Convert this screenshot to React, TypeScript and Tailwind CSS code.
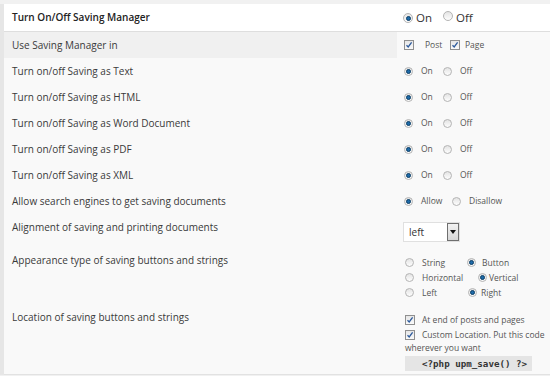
import React from "react";

function Radio({ checked, big }: { checked?: boolean; big?: boolean }) {
  return (
    <span
      className={`inline-flex items-center justify-center rounded-full border border-[#b4b4b4] bg-gradient-to-b from-[#e4e4e4] to-[#fdfdfd] shrink-0 ${big ? "w-[10px] h-[10px]" : "w-[9px] h-[9px]"}`}
    >
      {checked && <span className="w-[5px] h-[5px] rounded-full bg-[#1d6aa8] border border-[#0b3d66]" />}
    </span>
  );
}

function Check() {
  return (
    <span className="inline-flex items-center justify-center w-[10px] h-[10px] border border-[#8f8f8f] bg-gradient-to-b from-[#e6e6e6] to-[#fafafa] shrink-0">
      <svg width="8" height="8" viewBox="0 0 8 8">
        <path d="M1.5 4.2 L3.2 6 L6.6 1.4" fill="none" stroke="#2d5a9c" strokeWidth="1.3" />
      </svg>
    </span>
  );
}

function Pair({ a, b, wa }: { a: string; b: string; wa: number }) {
  return (
    <div className="flex items-center text-[8.5px] leading-[12px] text-[#555]">
      <Radio checked />
      <span className="ml-[8px]" style={{ width: wa }}>{a}</span>
      <Radio />
      <span className="ml-[8px]">{b}</span>
    </div>
  );
}

function Row({ label, children, h = 26, pt = 4, gray }: { label: string; children?: React.ReactNode; h?: number; pt?: number; gray?: boolean }) {
  return (
    <div className="flex" style={{ height: h }}>
      <div
        className={`w-[393px] shrink-0 pl-[8px] text-[10px] leading-[18px] text-[#3a3a3a] ${gray ? "bg-[#f0f0f0]" : ""}`}
        style={{ paddingTop: pt }}
      >
        {label}
      </div>
      <div className="flex-1 pl-[7px]" style={{ paddingTop: pt + 3 }}>
        {children}
      </div>
    </div>
  );
}

export default function App() {
  return (
    <div className="w-[550px] h-[376px] overflow-hidden bg-[#f1f1f1] pt-[4px]" style={{ fontFamily: '"Open Sans", sans-serif' }}>
      <div className="flex">
        <div className="w-[4px] bg-[#e6e6e6] shrink-0" />
        <div className="flex-1 bg-[#f9f9f9] border-b border-[#e2e2e2]">
          {/* header */}
          <div className="flex h-[28px] bg-white border-b border-[#dedede]">
            <div className="w-[393px] shrink-0 pl-[8px] pt-[4px] text-[10px] leading-[18px] font-semibold text-[#222]">
              Turn On/Off Saving Manager
            </div>
            <div className="flex-1 pl-[6px] pt-[4px] flex items-start">
              <div className="flex items-center text-[11.5px] leading-[18px] text-[#333] pt-[1px]">
                <span className="-mt-[3px]"><Radio checked big /></span>
                <span className="ml-[3px] w-[27px]">On</span>
                <span className="-mt-[3px]"><Radio big /></span>
                <span className="ml-[3px]">Off</span>
              </div>
            </div>
          </div>
          <Row label="Use Saving Manager in" gray>
            <div className="flex items-center text-[8.5px] leading-[12px] text-[#555]">
              <Check />
              <span className="ml-[11px] w-[25px]">Post</span>
              <Check />
              <span className="ml-[5px]">Page</span>
            </div>
          </Row>
          <Row label="Turn on/off Saving as Text"><Pair a="On" b="Off" wa={22} /></Row>
          <Row label="Turn on/off Saving as HTML"><Pair a="On" b="Off" wa={22} /></Row>
          <Row label="Turn on/off Saving as Word Document"><Pair a="On" b="Off" wa={22} /></Row>
          <Row label="Turn on/off Saving as PDF"><Pair a="On" b="Off" wa={22} /></Row>
          <Row label="Turn on/off Saving as XML"><Pair a="On" b="Off" wa={22} /></Row>
          <Row label="Allow search engines to get saving documents"><Pair a="Allow" b="Disallow" wa={31} /></Row>
          <div className="flex h-[32px]">
            <div className="w-[393px] shrink-0 pl-[8px] pt-[4px] text-[10px] leading-[18px] text-[#3a3a3a]">
              Alignment of saving and printing documents
            </div>
            <div className="flex-1 pl-[6px] pt-[8px]">
              <div className="flex w-[57px] h-[20px] border border-[#e0e0e0] bg-white">
                <span className="flex-1 pl-[5px] text-[10px] leading-[18px] text-[#333]">left</span>
                <span className="w-[12px] h-[18px] border border-[#6f6f6f] bg-gradient-to-b from-[#f2f2f2] to-[#d6d6d6] flex items-center justify-center">
                  <svg width="6" height="4" viewBox="0 0 6 4"><path d="M0 0 H6 L3 4 Z" fill="#111" /></svg>
                </span>
              </div>
            </div>
          </div>
          {/* appearance */}
          <div className="flex h-[60px]">
            <div className="w-[393px] shrink-0 pl-[8px] pt-[5px] text-[10px] leading-[18px] text-[#3a3a3a]">
              Appearance type of saving buttons and strings
            </div>
            <div className="flex-1 pl-[8px] pt-[9px] text-[8.5px] leading-[15px] text-[#555]">
              <div className="flex items-center">
                <Radio />
                <span className="ml-[8px] w-[45px]">String</span>
                <Radio checked />
                <span className="ml-[6px]">Button</span>
              </div>
              <div className="flex items-center">
                <Radio />
                <span className="ml-[8px] w-[56px]">Horizontal</span>
                <Radio checked />
                <span className="ml-[2px]">Vertical</span>
              </div>
              <div className="flex items-center">
                <Radio />
                <span className="ml-[8px] w-[46px]">Left</span>
                <Radio checked />
                <span className="ml-[4px]">Right</span>
              </div>
            </div>
          </div>
          {/* location */}
          <div className="flex h-[68px]">
            <div className="w-[393px] shrink-0 pl-[8px] pt-[2px] text-[10px] leading-[18px] text-[#3a3a3a]">
              Location of saving buttons and strings
            </div>
            <div className="flex-1 pl-[8px] pt-[6px] text-[8.5px] leading-[15px] text-[#555]">
              <div className="flex items-center">
                <Check />
                <span className="ml-[7px]">At end of posts and pages</span>
              </div>
              <div className="flex items-center">
                <Check />
                <span className="ml-[7px] whitespace-nowrap">Custom Location. Put this code</span>
              </div>
              <div className="text-[8.5px] leading-[14px] -mt-[1px]">wherever you want</div>
              <div className="w-[127px] h-[15px] mt-[1px] bg-[#e5e5e5] pl-[17px] text-[9.2px] leading-[15px] font-bold text-[#333] whitespace-pre" style={{ fontFamily: '"DejaVu Sans Mono", monospace' }}>
                {"<?php upm_save() ?>"}
              </div>
            </div>
          </div>
        </div>
      </div>
    </div>
  );
}
